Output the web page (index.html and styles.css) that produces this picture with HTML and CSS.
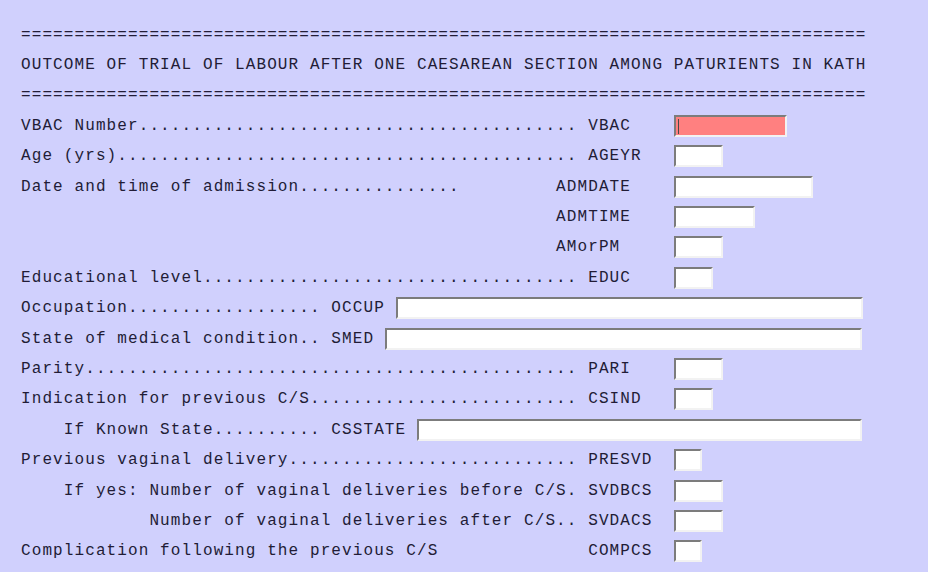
FILE: index.html
```html
<!DOCTYPE html>
<html lang="en">
<head>
<meta charset="utf-8">
<title>VBAC form</title>
<link rel="stylesheet" href="styles.css">
</head>
<body>
<form class="sheet">
  <div class="row"><span class="txt">===============================================================================</span></div>
  <div class="row"><span class="txt">OUTCOME OF TRIAL OF LABOUR AFTER ONE CAESAREAN SECTION AMONG PATURIENTS IN KATH</span></div>
  <div class="row"><span class="txt">===============================================================================</span></div>

  <div class="row"><span class="lab">VBAC Number......................................... VBAC</span><input class="fld w-vbac active" type="text"></div>
  <div class="row"><span class="lab">Age (yrs)........................................... AGEYR</span><input class="fld w5" type="text"></div>
  <div class="row"><span class="lab">Date and time of admission...............         ADMDATE</span><input class="fld w-date" type="text"></div>
  <div class="row"><span class="lab">                                                  ADMTIME</span><input class="fld w-time" type="text"></div>
  <div class="row"><span class="lab">                                                  AMorPM</span><input class="fld w5" type="text"></div>
  <div class="row"><span class="lab">Educational level................................... EDUC</span><input class="fld w4" type="text"></div>
  <div class="row"><span class="txt">Occupation.................. OCCUP </span><input class="fld w-occup" type="text"></div>
  <div class="row"><span class="txt">State of medical condition.. SMED </span><input class="fld w-smed" type="text"></div>
  <div class="row"><span class="lab">Parity.............................................. PARI</span><input class="fld w5" type="text"></div>
  <div class="row"><span class="lab">Indication for previous C/S......................... CSIND</span><input class="fld w4" type="text"></div>
  <div class="row"><span class="txt">    If Known State.......... CSSTATE </span><input class="fld w-csstate" type="text"></div>
  <div class="row"><span class="lab">Previous vaginal delivery........................... PRESVD</span><input class="fld w3" type="text"></div>
  <div class="row"><span class="lab">    If yes: Number of vaginal deliveries before C/S. SVDBCS</span><input class="fld w5" type="text"></div>
  <div class="row"><span class="lab">            Number of vaginal deliveries after C/S.. SVDACS</span><input class="fld w5" type="text"></div>
  <div class="row"><span class="lab">Complication following the previous C/S              COMPCS</span><input class="fld w3" type="text"></div>
</form>
</body>
</html>
```
FILE: styles.css
```css
:root {
  --c: 10.7px;
}

html, body {
  margin: 0;
  padding: 0;
  background: #d0d0fd;
}

.sheet {
  padding: 19.5px 0 0 21px;
  font-family: "Liberation Mono", "DejaVu Sans Mono", monospace;
  font-size: 16px;
  letter-spacing: 1.1px;
  color: #221c36;
}

.row {
  display: flex;
  align-items: center;
  height: 30.4px;
}

.txt,
.lab {
  white-space: pre;
  flex: none;
}

.lab {
  width: calc(var(--c) * 61);
}

.fld {
  flex: none;
  box-sizing: border-box;
  height: 22px;
  margin: 0;
  padding: 0;
  font: inherit;
  background: #ffffff;
  border-style: solid;
  border-width: 2px;
  border-color: #7c7c7c #f2f2f2 #f2f2f2 #7c7c7c;
  outline: none;
}

.active {
  background: linear-gradient(#4a4a4a, #4a4a4a) 2px 2px / 1px 15px no-repeat, #ff8080;
}

.w-vbac { width: 113px; }
.w5 { width: 49px; }
.w4 { width: 39px; }
.w3 { width: 28px; }
.w-date { width: 139px; }
.w-time { width: 81px; }
.w-occup { width: 467px; }
.w-smed { width: 477px; }
.w-csstate { width: 445px; }
```
